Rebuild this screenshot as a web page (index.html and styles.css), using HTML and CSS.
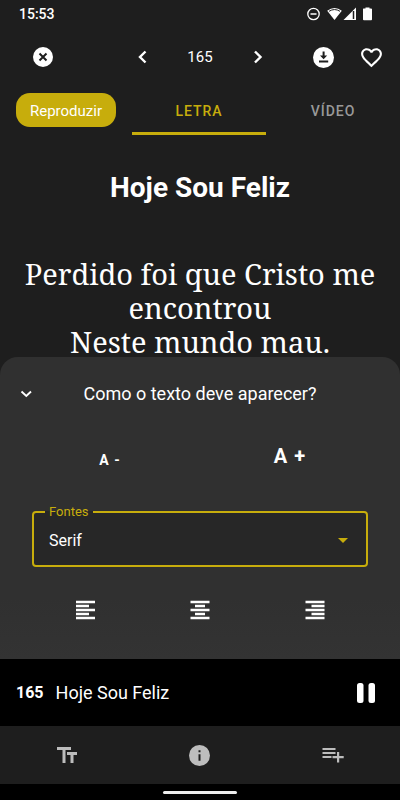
FILE: index.html
```html
<!DOCTYPE html>
<html lang="pt">
<head>
<meta charset="utf-8">
<meta name="viewport" content="width=device-width, initial-scale=1">
<title>Hoje Sou Feliz</title>
<link rel="stylesheet" href="styles.css">
</head>
<body>
<div class="status">
  <span class="clock">15:53</span>
  <svg width="66" height="14" viewBox="0 0 66 14" aria-hidden="true">
    <circle cx="6.500" cy="7" r="5.700" fill="none" stroke="#fff" stroke-width="1.300"/>
    <path d="M3.500 7h6" stroke="#fff" stroke-width="1.500"/>
    <path d="M20.200 3.800Q27.500-2 34.800 3.800L27.500 13z" fill="#fff"/>
    <path d="M22 4.300Q27.500.800 33 4.300" fill="none" stroke="#1e1e1e" stroke-width="1"/>
    <path d="M36.500 13L49 .500V13z" fill="#fff"/>
    <path d="M46.500 4V12" stroke="#1e1e1e" stroke-width="1.500"/>
    <path d="M56.500 1.500h2V.500h4v1h1.500q1 0 1 .800v10q0 1-.800 1h-7.200q-1 0-1-.800v-10.200q0-.800.500-.800z" fill="#fff"/>
  </svg>
</div>
<header class="toolbar">
  <button class="icon" aria-label="Fechar"><svg width="20" height="20" viewBox="0 0 20 20"><circle cx="10" cy="10" r="10" fill="#fff"/><path d="M6.500 6.500l7 7m0-7l-7 7" stroke="#1e1e1e" stroke-width="2"/></svg></button>
  <div class="pager">
    <button class="icon" aria-label="Anterior"><svg width="24" height="24" viewBox="0 0 24 24"><path d="M15.500 6.500L10 12l5.500 5.500" fill="none" stroke="#fff" stroke-width="2.400"/></svg></button>
    <span class="number">165</span>
    <button class="icon" aria-label="Próximo"><svg width="24" height="24" viewBox="0 0 24 24"><path d="M9 6.500l5.500 5.500L9 17.500" fill="none" stroke="#fff" stroke-width="2.400"/></svg></button>
  </div>
  <div class="actions">
    <button class="icon" aria-label="Baixar"><svg width="21" height="21" viewBox="0 0 21 21"><circle cx="10.500" cy="10.500" r="10.500" fill="#fff"/><path d="M9.600 4.500h2v4h2.600l-3.600 3.700L7 8.500h2.600zM6 13.600h9.200v2H6z" fill="#1e1e1e"/></svg></button>
    <button class="icon" aria-label="Favorito"><svg width="25" height="25" viewBox="0 0 24 24" fill="#fff"><path d="M16.500 3c-1.740 0-3.410.810-4.500 2.090C10.910 3.810 9.240 3 7.500 3 4.420 3 2 5.420 2 8.500c0 3.780 3.400 6.860 8.550 11.540L12 21.350l1.450-1.320C18.600 15.360 22 12.280 22 8.500 22 5.420 19.580 3 16.500 3zm-4.400 15.550l-.1.100-.1-.1C7.140 14.240 4 11.390 4 8.500 4 6.500 5.500 5 7.500 5c1.540 0 3.040.990 3.570 2.360h1.870C13.460 5.990 14.960 5 16.500 5c2 0 3.500 1.500 3.500 3.500 0 2.890-3.140 5.740-7.900 10.050z"/></svg></button>
  </div>
</header>
<nav class="tabs">
  <button class="play">Reproduzir</button>
  <a class="tab active" href="#letra">LETRA</a>
  <a class="tab" href="#video">VÍDEO</a>
</nav>
<main class="lyrics" id="letra">
  <h1>Hoje Sou Feliz</h1>
  <p>Perdido foi que Cristo me encontrou<br>Neste mundo mau.</p>
</main>
<section class="sheet">
  <div class="sheet-head">
    <button class="icon" aria-label="Recolher"><svg width="20" height="20" viewBox="0 0 20 20"><path d="M5.500 7.500l4.800 4.500L15 7.500" fill="none" stroke="#fff" stroke-width="1.900"/></svg></button>
    <h2>Como o texto deve aparecer?</h2>
  </div>
  <div class="sizes">
    <button class="smaller">A -</button>
    <button class="larger">A +</button>
  </div>
  <fieldset class="field">
    <legend><label for="font">Fontes</label></legend>
    <div class="picker">
      <select id="font"><option>Serif</option></select>
      <svg width="10" height="5" viewBox="0 0 10 5" aria-hidden="true"><path d="M0 0h10L5 5z" fill="#c7ad0c"/></svg>
    </div>
  </fieldset>
  <div class="aligns">
    <button class="icon" aria-label="Alinhar à esquerda"><svg width="20" height="20" viewBox="0 0 20 20"><path d="M1 2h19M1 6h13M1 10h19M1 14h13M1 18h19" stroke="#fff" stroke-width="2.400"/></svg></button>
    <button class="icon" aria-label="Centralizar"><svg width="20" height="20" viewBox="0 0 20 20"><path d="M.500 2h19M5 6h10M.500 10h19M5 14h10M.500 18h19" stroke="#fff" stroke-width="2.400"/></svg></button>
    <button class="icon" aria-label="Alinhar à direita"><svg width="20" height="20" viewBox="0 0 20 20"><path d="M.500 2h19M6.500 6h13M.500 10h19M6.500 14h13M.500 18h19" stroke="#fff" stroke-width="2.400"/></svg></button>
  </div>
</section>
<section class="player">
  <strong>165</strong>
  <span class="song">Hoje Sou Feliz</span>
  <button class="icon" aria-label="Pausar"><svg width="18" height="20" viewBox="0 0 18 20" fill="#fff"><rect width="6.500" height="20" rx="2.500"/><rect x="11.500" width="6.500" height="20" rx="2.500"/></svg></button>
</section>
<nav class="bottom">
  <button class="icon" aria-label="Texto"><svg width="20" height="16" viewBox="0 0 20 16" fill="#bdbdbd"><path d="M0 0h14v3H8.500v13h-3V3H0zM10 5h10v3h-3.500v8h-3V8H10z"/></svg></button>
  <button class="icon" aria-label="Informações"><svg width="21" height="21" viewBox="0 0 21 21"><circle cx="10.500" cy="10.500" r="10.500" fill="#bdbdbd"/><path d="M9.500 5.300h2v2h-2zM9.500 9.300h2v6.500h-2z" fill="#1e1e1e"/></svg></button>
  <button class="icon" aria-label="Adicionar à lista"><svg width="22" height="16" viewBox="0 0 22 16" fill="#bdbdbd"><path d="M.500 1h13v2h-13zM.500 5h13v2h-13zM.500 9h9v2h-9zM15 5h2.200v4h4.500v2.200h-4.500v4.300H15v-4.300h-4.500V9H15z"/></svg></button>
</nav>
<div class="gesture"><span></span></div>
</body>
</html>
```

FILE: styles.css
```css
* { box-sizing: border-box; }

body {
  margin: 0;
  height: 100vh;
  display: flex;
  flex-direction: column;
  background: #1e1e1e;
  color: #fff;
  font-family: Roboto, sans-serif;
  font-size: 16px;
}

button {
  border: 0;
  padding: 0;
  background: none;
  color: inherit;
  font: inherit;
}

svg { display: block; }

.icon { display: grid; place-items: center; }

.status {
  display: flex;
  align-items: center;
  justify-content: space-between;
  height: 28px;
  padding: 0 27px 0 19px;
}

.clock { font-size: 14px; font-weight: 500; }

.toolbar {
  display: grid;
  grid-template-columns: 97px 1fr 97px;
  align-items: center;
  height: 58px;
  padding: 0 16px;
}

.toolbar > .icon { justify-self: start; margin-left: 17px; }

.pager {
  display: flex;
  align-items: center;
  justify-content: space-between;
  width: 140px;
  margin: 0 auto;
}

.number { font-size: 15px; }

.actions {
  display: flex;
  align-items: center;
  justify-content: flex-end;
  gap: 25px;
}

.tabs { display: flex; align-items: flex-start; padding-left: 16px; }

.play {
  width: 100px;
  height: 34px;
  margin: 7px 16px 0 0;
  padding-top: 2px;
  border-radius: 14px;
  background: #c7ad0c;
  font-size: 15px;
}

.tab {
  flex: 1;
  height: 49px;
  border-bottom: 3px solid transparent;
  color: #999;
  font-size: 14px;
  font-weight: 500;
  line-height: 50px;
  letter-spacing: 1px;
  text-align: center;
  text-decoration: none;
}

.active { border-color: #c7ad0c; color: #c7ad0c; }

.lyrics {
  flex: 1;
  min-height: 0;
  margin-bottom: -20px;
  padding: 35px 16px 0;
  overflow: hidden;
  text-align: center;
}

h1 { margin: 0 0 51px; font-size: 28px; font-weight: 700; line-height: 36px; }

.lyrics p {
  margin: 0;
  font-family: "Noto Serif", "Droid Serif", "Liberation Serif", serif;
  font-size: 29px;
  line-height: 34px;
}

.sheet {
  position: relative;
  height: 302px;
  border-radius: 18px 18px 0 0;
  background: linear-gradient(#303030 80%, #333);
}

.sheet-head {
  display: grid;
  grid-template-columns: 20px 1fr 20px;
  align-items: center;
  height: 73px;
  padding: 0 16px;
}

h2 { margin: 0; font-size: 18px; font-weight: 400; text-align: center; }

.sizes {
  display: grid;
  grid-template-columns: 1fr 1fr;
  height: 52px;
  padding: 0 20px;
  font-weight: 700;
}

.smaller { font-size: 14px; padding-top: 8px; letter-spacing: 1px; }
.larger { font-size: 20px; letter-spacing: 1px; }

.field {
  min-width: 0;
  margin: 23px 32px 0;
  padding: 0;
  border: 2px solid #c7ad0c;
  border-radius: 4px;
  background: #272727;
}

legend {
  margin-left: 11px;
  padding: 0 4px;
  color: #c7ad0c;
  font-size: 13px;
  line-height: 14px;
}

.picker {
  display: grid;
  grid-template-columns: 1fr 28px;
  align-items: center;
  height: 46px;
  padding-bottom: 4px;
}

select {
  grid-area: 1 / 1 / 2 / 3;
  height: 100%;
  padding: 0 15px;
  appearance: none;
  border: 0;
  outline: 0;
  background: none;
  color: inherit;
  font: inherit;
}

.picker svg { grid-area: 1 / 2; pointer-events: none; }

.aligns {
  display: grid;
  grid-template-columns: repeat(3, 1fr);
  height: 86px;
  padding: 0 28px;
}

.player {
  display: flex;
  align-items: center;
  gap: 12px;
  height: 67px;
  padding: 0 25px 0 16px;
  background: #000;
}

.player strong { font-weight: 700; }
.song { flex: 1; font-size: 18px; }

.bottom { display: grid; grid-template-columns: repeat(3, 1fr); height: 58px; }

.gesture {
  display: grid;
  place-items: center;
  height: 16px;
  background: #000;
}

.gesture span { width: 74px; height: 3px; border-radius: 2px; background: #eee; }
```
